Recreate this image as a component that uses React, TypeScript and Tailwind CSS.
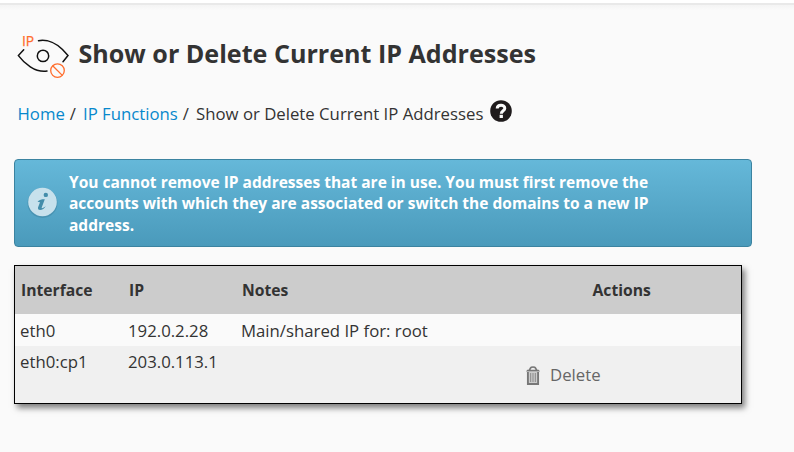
import React from "react";

function EyeIcon() {
  return (
    <svg width="54" height="46" viewBox="16 34 54 46" fill="none" className="shrink-0 overflow-visible">
      <g stroke="#111" strokeWidth="1.5" strokeLinecap="round">
        <path d="M38.500 40.700C48 39 57 44 62.500 49.500L68 55.600L63 61.700" />
        <path d="M23.700 49.700L18.400 55.600C24 63 35 73 47 71.100" />
        <circle cx="43" cy="55.900" r="5.700" />
      </g>
      <g stroke="#ff6c2c" strokeWidth="1.300">
        <circle cx="57.500" cy="70.600" r="6.800" />
        <path d="M52.700 65.800L62.300 75.400" />
      </g>
      <text x="22" y="45.600" fill="#ff6c2c" stroke="#ff6c2c" strokeWidth=".25" fontSize="13.800" fontFamily="Open Sans, sans-serif">IP</text>
    </svg>
  );
}

function HelpIcon() {
  return (
    <svg width="22" height="22" viewBox="0 0 22 22" className="shrink-0">
      <circle cx="11" cy="11" r="10.800" fill="#1f1b1c" />
      <path d="M7.200 8.600C7.200 4.300 14.800 4.200 14.800 8.200C14.800 10.900 11.300 10.600 11.300 13.800" fill="none" stroke="#fafafa" strokeWidth="3" />
      <rect x="9.600" y="14.800" width="3.300" height="3.200" fill="#fafafa" />
    </svg>
  );
}

function InfoIcon() {
  return (
    <svg width="32" height="34" viewBox="0 0 32 34" className="shrink-0">
      <circle cx="15.500" cy="17" r="15" fill="#397f9c" opacity=".45" />
      <circle cx="15.500" cy="16" r="14.300" fill="#c7e1ec" />
      <circle cx="18.800" cy="8.900" r="2.200" fill="#438daa" />
      <path d="M10.500 15.800C12.500 13.400 15.500 13.100 17.800 13.200L14.800 21.300C14.200 23.300 16.700 22.100 18.700 20.100C17 24.300 10.300 25.800 11 21.600L13 16.200Z" fill="#438daa" />
    </svg>
  );
}

function TrashIcon() {
  return (
    <svg width="14" height="19" viewBox="0 0 14 19" fill="none" className="shrink-0">
      <path d="M3.300 4.300L4.600 1.800Q5 1 7 1Q9 1 9.400 1.800L10.700 4.300" stroke="#777" strokeWidth="1.700" />
      <path d="M0 5.600L1.300 3.800H12.700L14 5.600Z" fill="#777" />
      <path d="M1.900 6V18H12.100V6" fill="#ccc" stroke="#777" strokeWidth="1.900" />
      <path d="M4.700 7V16M7 7V16M9.300 7V16" stroke="#888" strokeWidth="1" />
    </svg>
  );
}

export default function App() {
  return (
    <div className="h-[452px] w-[794px] overflow-hidden bg-[#fafafa] font-['Open_Sans',sans-serif] text-[16.75px] leading-[24px] text-[#333]">
      <div className="h-[3px] bg-white" />
      <div className="h-[2px] bg-[#e9e9e9]" />
      <div className="h-[5px] bg-linear-to-b from-[#f4f4f4] to-[#fafafa]" />

      <header className="flex pt-6 pl-4">
        <EyeIcon />
        <h1 className="ml-[8.5px] text-[25.1px] leading-[38px] font-bold whitespace-nowrap">
          Show or Delete Current IP Addresses
        </h1>
      </header>

      <nav className="mt-[21px] flex h-[26px] items-center pl-[17.5px] whitespace-nowrap">
        <a className="text-[#0788cc]">Home</a>
        <span className="ml-[5px]">/</span>
        <a className="ml-[7px] text-[#0788cc]">IP Functions</a>
        <span className="ml-[5px]">/</span>
        <span className="ml-[7px]">Show or Delete Current IP Addresses</span>
        <span className="mb-[7px] ml-[7px]"><HelpIcon /></span>
      </nav>

      <section className="mt-[32px] ml-[14px] flex h-[88px] w-[738px] items-center rounded-[4px] border border-[#3b83a0] bg-linear-to-b from-[#65b8d9] to-[#4a9abb] pl-3 text-white">
        <InfoIcon />
        <p className="ml-[10px] pt-[2px] text-[15.53px] leading-[21.500px] font-bold whitespace-nowrap">
          You cannot remove IP addresses that are in use. You must first remove the<br />
          accounts with which they are associated or switch the domains to a new IP<br />
          address.
        </p>
      </section>

      <table className="mt-[18px] ml-[14px] w-[728px] table-fixed border-separate border-spacing-0 border border-black shadow-[3px_4px_6px_0px_rgba(0,0,0,0.5)]">
        <colgroup>
          <col className="w-[108px]" /><col className="w-[113px]" /><col className="w-[265px]" /><col />
        </colgroup>
        <thead>
          <tr className="h-[48px] bg-[#ccc] text-left text-[15.7px]">
            <th className="p-0 pl-[6px]">Interface</th>
            <th className="p-0 pl-[6px]">IP</th>
            <th className="p-0 pl-[6px]">Notes</th>
            <th className="p-0 pl-[91.5px]">Actions</th>
          </tr>
        </thead>
        <tbody>
          <tr className="h-[32px] bg-[#fafafa]">
            <td className="p-0 pt-px pl-[5px]">eth0</td>
            <td className="p-0 pt-px pl-[5px]">192.0.2.28</td>
            <td className="p-0 pt-px pl-[5px]">Main/shared IP for: root</td>
            <td className="p-0" />
          </tr>
          <tr className="h-[57px] bg-[#f0f0f0] align-top">
            <td className="p-0 pt-1 pl-[5px]">eth0:cp1</td>
            <td className="p-0 pt-1 pl-[5px]">203.0.113.1</td>
            <td className="p-0" />
            <td className="p-0 pt-[17px] pl-[25px]">
              <div className="flex items-center text-[#666]">
                <TrashIcon />
                <span className="ml-[10px]">Delete</span>
              </div>
            </td>
          </tr>
        </tbody>
      </table>
    </div>
  );
}
